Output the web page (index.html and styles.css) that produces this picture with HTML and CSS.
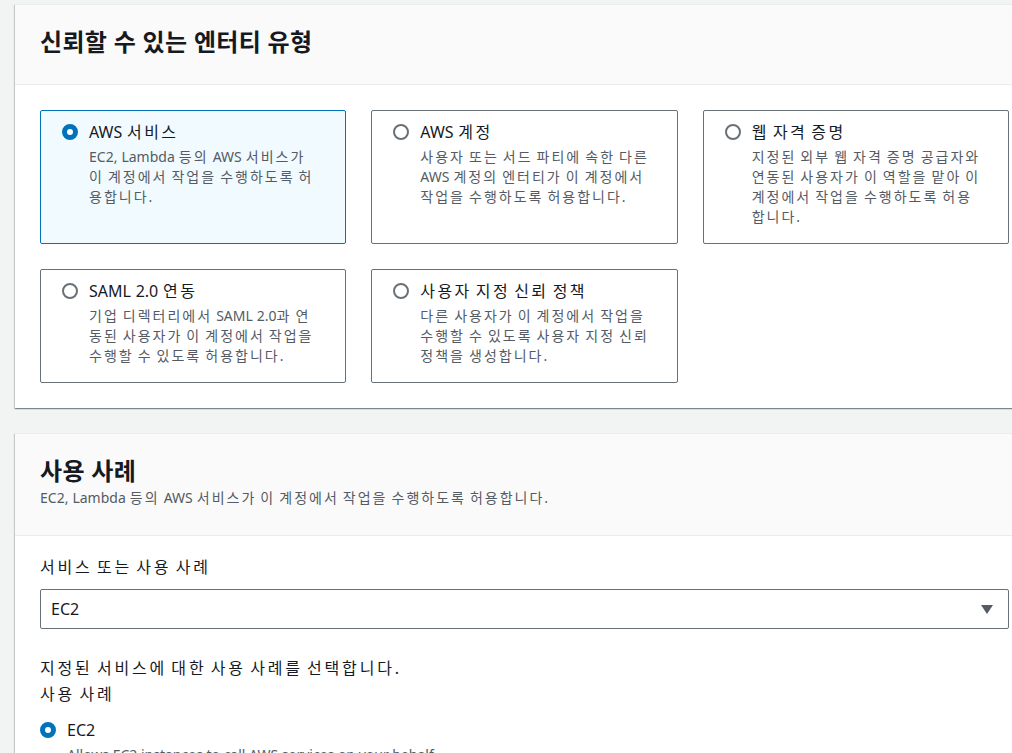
FILE: index.html
```html
<!DOCTYPE html>
<html lang="ko">
<head>
<meta charset="utf-8">
<title>역할 생성</title>
<link rel="stylesheet" href="styles.css">
</head>
<body>
<div class="page">
  <section class="panel">
    <header class="panel-header">
      <h2 class="panel-title">신뢰할 수 있는 엔터티 유형</h2>
    </header>
    <div class="panel-body">
      <div class="tiles">
        <div class="tile selected">
          <span class="radio checked"></span>
          <div class="tile-text">
            <div class="tile-title ko"><span class="en">AWS </span>서비스</div>
            <div class="tile-desc ko"><span class="en">EC2, Lambda </span>등의 <span class="en">AWS </span>서비스가 이 계정에서 작업을 수행하도록 허용합니다.</div>
          </div>
        </div>
        <div class="tile">
          <span class="radio"></span>
          <div class="tile-text">
            <div class="tile-title ko"><span class="en">AWS </span>계정</div>
            <div class="tile-desc ko">사용자 또는 서드 파티에 속한 다른 <span class="en">AWS </span>계정의 엔터티가 이 계정에서 작업을 수행하도록 허용합니다.</div>
          </div>
        </div>
        <div class="tile">
          <span class="radio"></span>
          <div class="tile-text">
            <div class="tile-title ko">웹 자격 증명</div>
            <div class="tile-desc ko">지정된 외부 웹 자격 증명 공급자와 연동된 사용자가 이 역할을 맡아 이 계정에서 작업을 수행하도록 허용합니다.</div>
          </div>
        </div>
        <div class="tile">
          <span class="radio"></span>
          <div class="tile-text">
            <div class="tile-title ko"><span class="en">SAML 2.0 </span>연동</div>
            <div class="tile-desc ko">기업 디렉터리에서 <span class="en">SAML 2.0</span>과 연동된 사용자가 이 계정에서 작업을 수행할 수 있도록 허용합니다.</div>
          </div>
        </div>
        <div class="tile">
          <span class="radio"></span>
          <div class="tile-text">
            <div class="tile-title ko">사용자 지정 신뢰 정책</div>
            <div class="tile-desc ko">다른 사용자가 이 계정에서 작업을 수행할 수 있도록 사용자 지정 신뢰 정책을 생성합니다.</div>
          </div>
        </div>
      </div>
    </div>
  </section>

  <section class="panel">
    <header class="panel-header">
      <h2 class="panel-title">사용 사례</h2>
      <p class="panel-desc ko"><span class="en">EC2, Lambda </span>등의 <span class="en">AWS </span>서비스가 이 계정에서 작업을 수행하도록 허용합니다.</p>
    </header>
    <div class="panel-body body-form">
      <div class="field-label ko">서비스 또는 사용 사례</div>
      <div class="select">
        <span>EC2</span>
        <svg class="caret" width="14" height="12" viewBox="0 0 14 12"><path d="M1 2h12L7 11z" fill="#545b64"/></svg>
      </div>
      <div class="hint ko">지정된 서비스에 대한 사용 사례를 선택합니다.</div>
      <div class="sub-label ko">사용 사례</div>
      <div class="option">
        <span class="radio checked"></span>
        <div class="tile-text">
          <div class="tile-title">EC2</div>
          <div class="tile-desc">Allows EC2 instances to call AWS services on your behalf.</div>
        </div>
      </div>
    </div>
  </section>
</div>
</body>
</html>
```

FILE: styles.css
```css
html, body {
  margin: 0;
  padding: 0;
  background: #f2f3f3;
  overflow: hidden;
}
body {
  font-family: "Noto Sans", "Noto Sans CJK KR", sans-serif;
  color: #16191f;
}
.ko {
  letter-spacing: 2px;
  word-spacing: -1.6px;
}
.ko .en {
  letter-spacing: 0;
  word-spacing: 0.4px;
}
.page {
  width: 1019px;
  padding: 4px 0 0 15px;
  display: flex;
  flex-direction: column;
  gap: 25px;
}
.panel {
  background: #fff;
  border-top: 1px solid #eaeded;
  box-shadow: 0 1px 1px 0 rgba(0,28,36,.3), 1px 1px 1px 0 rgba(0,28,36,.15), -1px 1px 1px 0 rgba(0,28,36,.15);
}
.panel-header {
  background: #fafafa;
  border-bottom: 1px solid #eaeded;
  padding: 22px 25px 27px;
}
.panel-title {
  margin: 0;
  font-size: 24px;
  line-height: 30px;
  font-weight: 700;
  color: #16191f;
  letter-spacing: 0.3px;
}
.panel-desc {
  margin: 2px 0 0;
  font-size: 14px;
  line-height: 20px;
  color: #545b64;
}
.panel-body {
  padding: 25px;
}
.tiles {
  display: grid;
  grid-template-columns: repeat(3, 1fr);
  gap: 25px;
}
.tile {
  border: 1px solid #687078;
  border-radius: 2px;
  padding: 10px 25px 16px 21px;
  display: flex;
  gap: 11px;
  align-items: flex-start;
}
.tile.selected {
  border-color: #0073bb;
  background: #f1faff;
}
.radio {
  flex: none;
  width: 16px;
  height: 16px;
  box-sizing: border-box;
  border: 2px solid #687078;
  border-radius: 50%;
  background: #fff;
  margin-top: 3px;
}
.radio.checked {
  border: 5px solid #0073bb;
}
.tile-title {
  font-size: 16px;
  line-height: 22px;
  color: #16191f;
}
.tile-title.ko {
  letter-spacing: 2.4px;
  word-spacing: -2.4px;
}
.tile-title.ko .en {
  word-spacing: 0.6px;
}
.tile-desc {
  margin-top: 4px;
  font-size: 14px;
  line-height: 20px;
  color: #545b64;
}
.body-form {
  padding-top: 20px;
}
.field-label {
  font-size: 16px;
  line-height: 22px;
  color: #16191f;
}
.field-label.ko, .hint.ko, .sub-label.ko {
  letter-spacing: 2.8px;
  word-spacing: -2.6px;
}
.select {
  margin-top: 11px;
  height: 40px;
  box-sizing: border-box;
  border: 1px solid #687078;
  border-radius: 2px;
  display: flex;
  align-items: center;
  justify-content: space-between;
  padding: 0 14px 0 10px;
  font-size: 16px;
  width: 969px;
}
.hint {
  margin-top: 28px;
  font-size: 16px;
  line-height: 22px;
}
.sub-label {
  margin-top: 4px;
  font-size: 16px;
  line-height: 22px;
}
.option {
  margin-top: 14px;
  display: flex;
  gap: 11px;
  align-items: flex-start;
}
```
